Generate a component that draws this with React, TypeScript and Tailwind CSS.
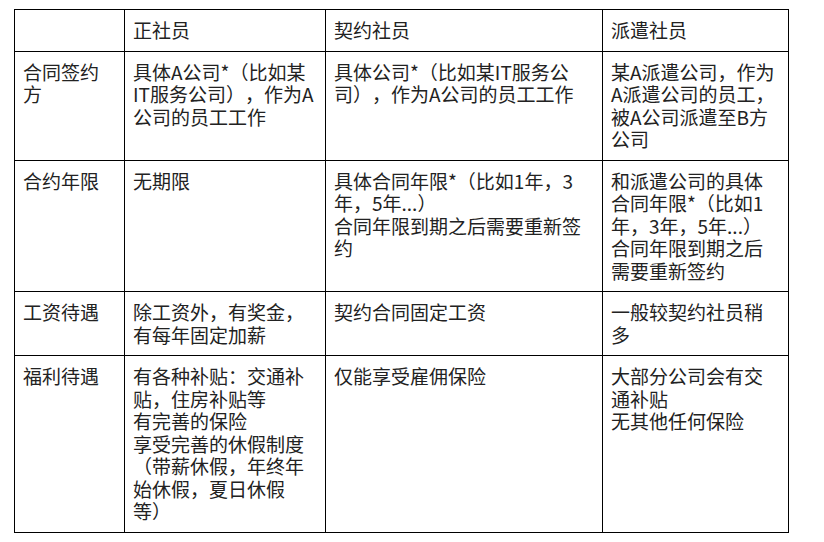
const header = ["", "正社员", "契约社员", "派遣社员"];

const rows: { label: string; cells: string[][] }[] = [
  {
    label: "合同签约方",
    cells: [
      ["具体A公司*（比如某IT服务公司），作为A公司的员工工作"],
      ["具体公司*（比如某IT服务公司），作为A公司的员工工作"],
      ["某A派遣公司，作为A派遣公司的员工，被A公司派遣至B方公司"],
    ],
  },
  {
    label: "合约年限",
    cells: [
      ["无期限"],
      ["具体合同年限*（比如1年，3年，5年...）", "合同年限到期之后需要重新签约"],
      ["和派遣公司的具体合同年限*（比如1年，3年，5年...）", "合同年限到期之后需要重新签约"],
    ],
  },
  {
    label: "工资待遇",
    cells: [["除工资外，有奖金，有每年固定加薪"], ["契约合同固定工资"], ["一般较契约社员稍多"]],
  },
  {
    label: "福利待遇",
    cells: [
      [
        "有各种补贴：交通补贴，住房补贴等",
        "有完善的保险",
        "享受完善的休假制度（带薪休假，年终年始休假，夏日休假等）",
      ],
      ["仅能享受雇佣保险"],
      ["大部分公司会有交通补贴", "无其他任何保险"],
    ],
  },
];

const cell = "border border-black align-top px-2 py-[9px] text-left font-normal";

export default function App() {
  return (
    <div
      className="w-[824px] h-[542px] bg-white pt-[9px] pl-[14px] text-[19px] leading-[22.5px] text-[#222] [text-spacing-trim:space-all]"
      style={{ fontFamily: '"Noto Sans CJK SC", "Noto Sans", sans-serif' }}
    >
      <table className="table-fixed border-collapse w-[774px]">
        <colgroup>
          <col className="w-[110px]" />
          <col className="w-[201px]" />
          <col className="w-[277px]" />
          <col className="w-[186px]" />
        </colgroup>
        <thead>
          <tr>
            {header.map((h, i) => (
              <th key={i} className={cell}>
                {h}
              </th>
            ))}
          </tr>
        </thead>
        <tbody>
          {rows.map((r) => (
            <tr key={r.label}>
              <td className={cell}>{r.label}</td>
              {r.cells.map((lines, i) => (
                <td key={i} className={cell}>
                  {lines.map((l, j) => (
                    <div key={j}>{l}</div>
                  ))}
                </td>
              ))}
            </tr>
          ))}
        </tbody>
      </table>
    </div>
  );
}
